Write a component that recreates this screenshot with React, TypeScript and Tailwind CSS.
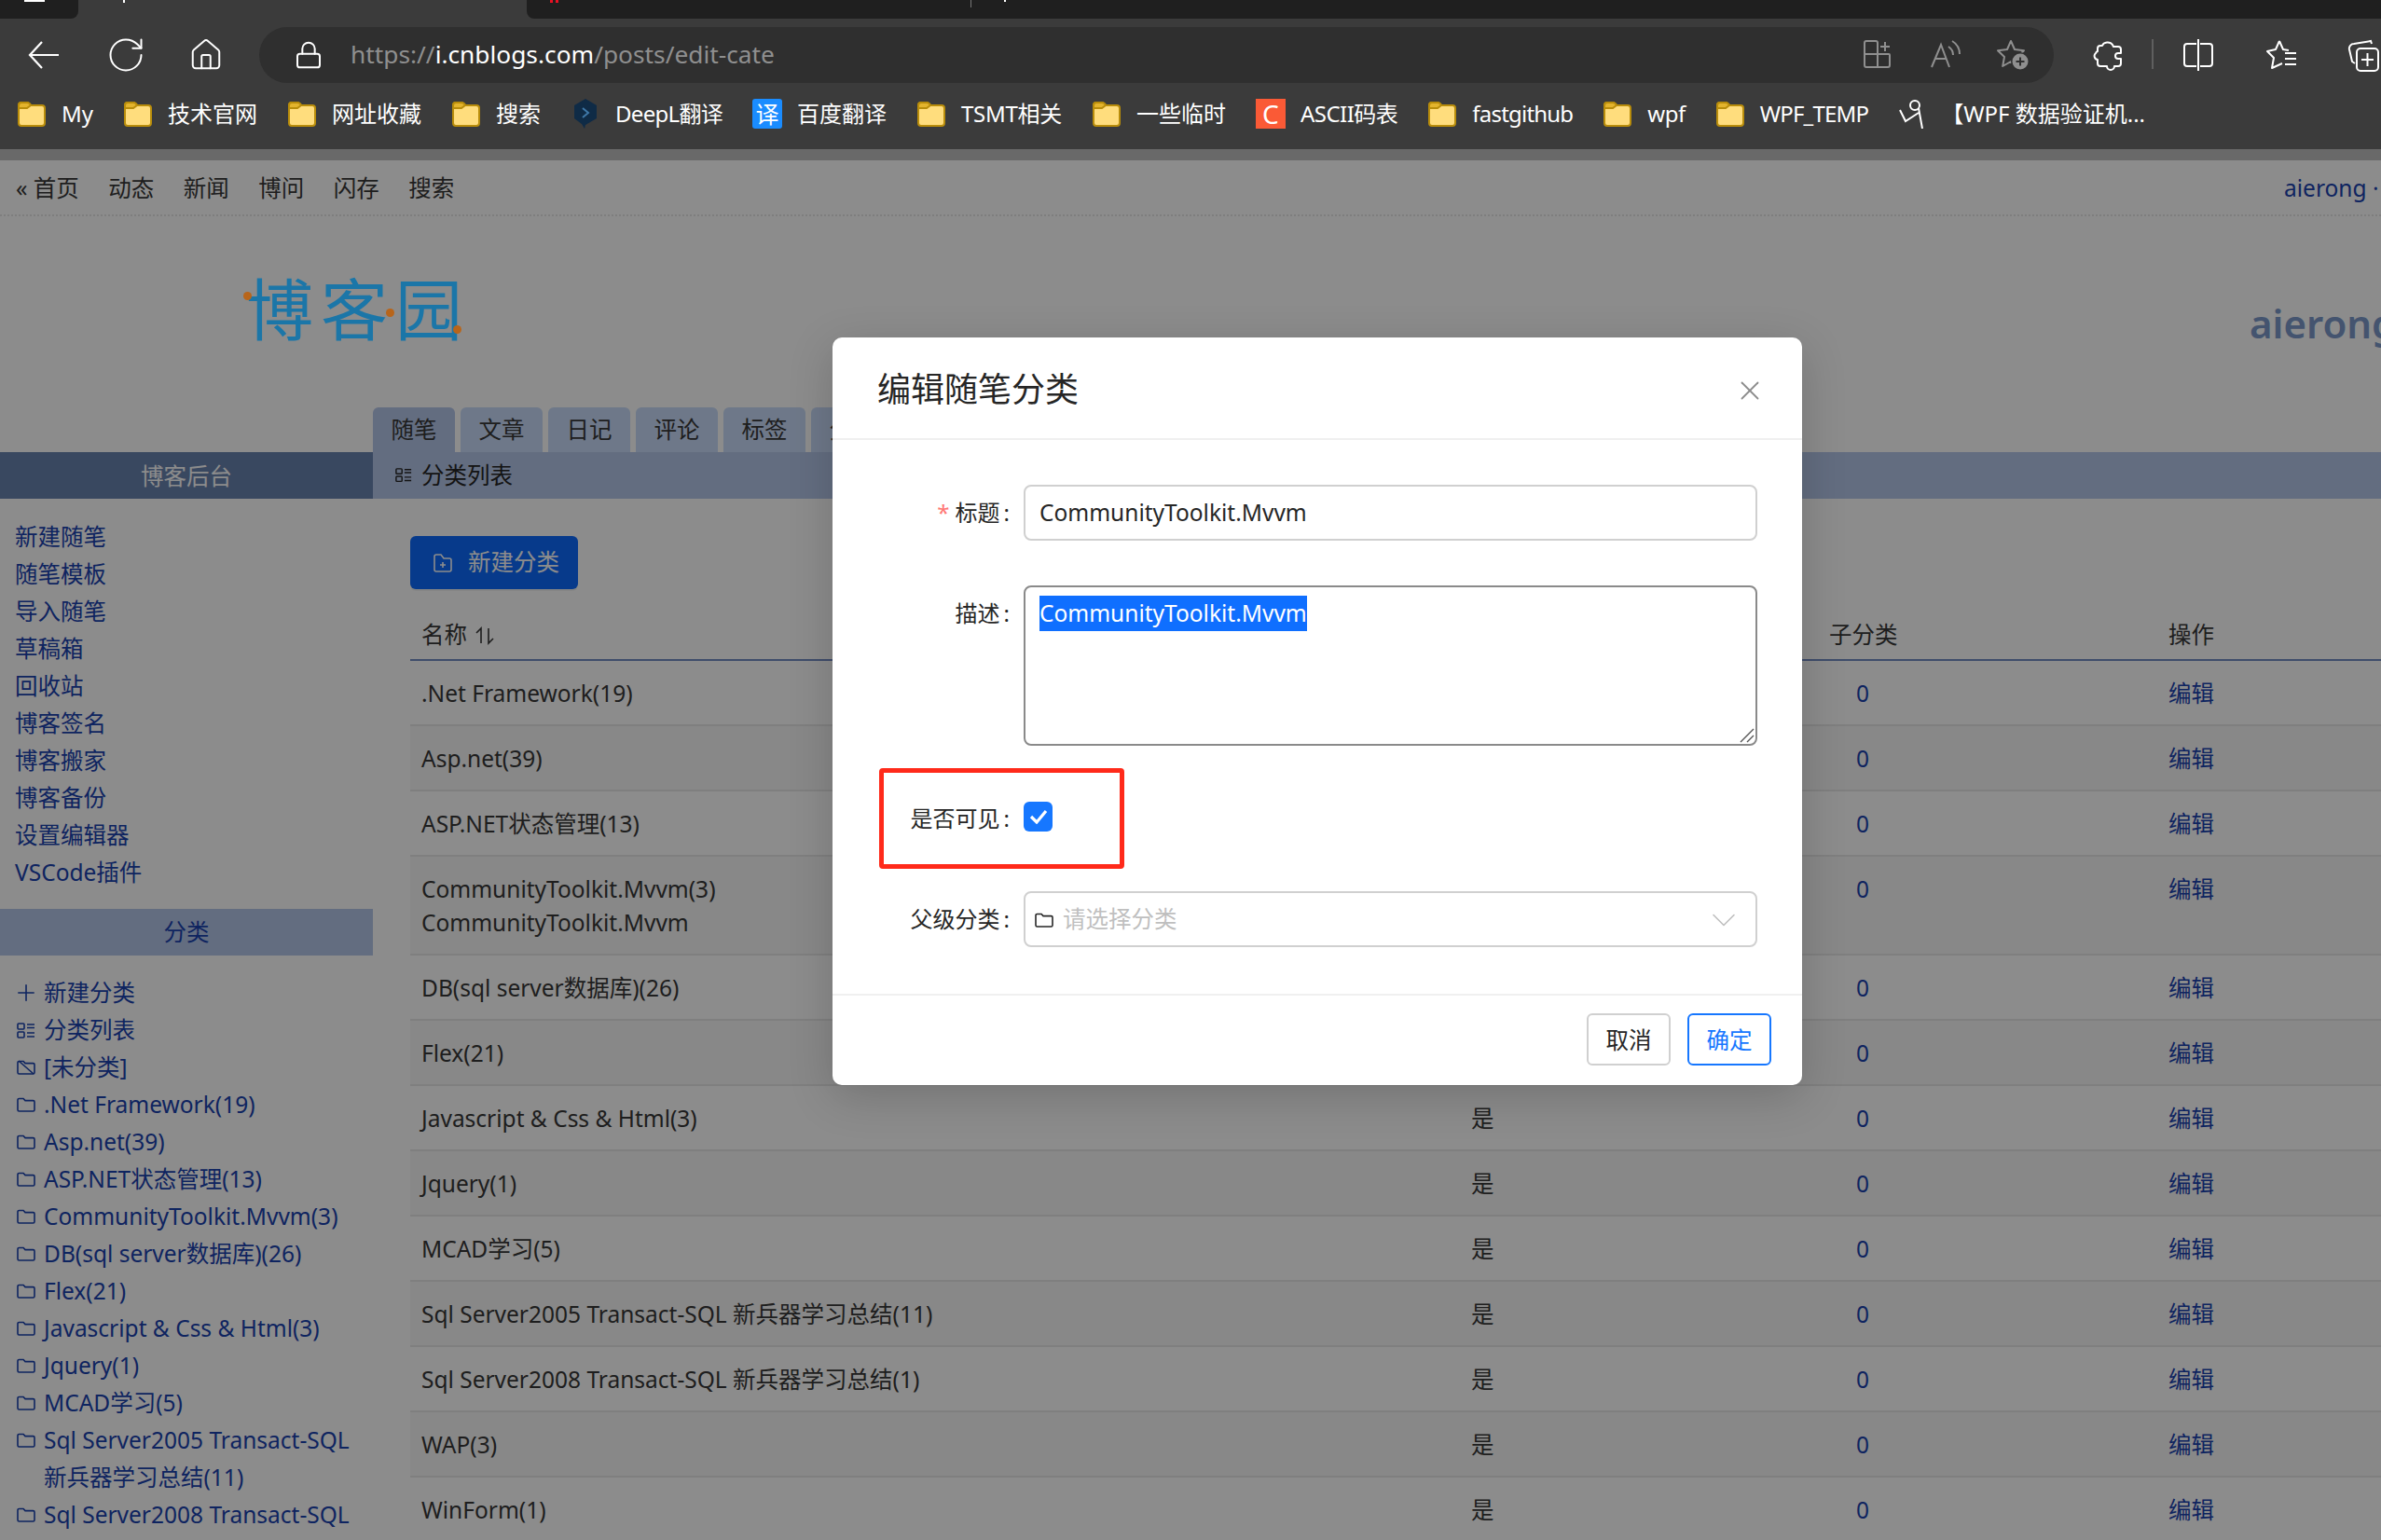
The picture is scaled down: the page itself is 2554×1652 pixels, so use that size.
import { ChevronDown, Home, Lock, Plus, RotateCw, X } from "lucide-react";
import type { ReactNode } from "react";

const sideLinks = ["新建随笔", "随笔模板", "导入随笔", "草稿箱", "回收站", "博客签名", "博客搬家", "博客备份", "设置编辑器", "VSCode插件"];

const categories = [
  ".Net Framework(19)",
  "Asp.net(39)",
  "ASP.NET状态管理(13)",
  "CommunityToolkit.Mvvm(3)",
  "DB(sql server数据库)(26)",
  "Flex(21)",
  "Javascript & Css & Html(3)",
  "Jquery(1)",
  "MCAD学习(5)",
  "Sql Server2005 Transact-SQL 新兵器学习总结(11)",
  "Sql Server2008 Transact-SQL 新兵器学习总结(1)",
];

const rows = [
  ".Net Framework(19)",
  "Asp.net(39)",
  "ASP.NET状态管理(13)",
  "CommunityToolkit.Mvvm(3)\nCommunityToolkit.Mvvm",
  "DB(sql server数据库)(26)",
  "Flex(21)",
  "Javascript & Css & Html(3)",
  "Jquery(1)",
  "MCAD学习(5)",
  "Sql Server2005 Transact-SQL 新兵器学习总结(11)",
  "Sql Server2008 Transact-SQL 新兵器学习总结(1)",
  "WAP(3)",
  "WinForm(1)",
];

function YellowFolder() {
  return (
    <svg width="32" height="28" viewBox="0 0 32 28" className="shrink-0">
      <path d="M2 5a3 3 0 0 1 3-3h6c2 0 3 1 4 3h12a3 3 0 0 1 3 3v16a3 3 0 0 1-3 3H5a3 3 0 0 1-3-3z" fill="#ffdd7d" stroke="#b98d0b" strokeWidth="2" />
      <path d="M2 5a3 3 0 0 1 3-3h6c2 0 3 1 4 3l-4 3H2z" fill="#e3b42d" stroke="#b98d0b" strokeWidth="2" />
    </svg>
  );
}

function SmallFolder({ className = "text-[#1b43af]" }: { className?: string }) {
  return (
    <svg width="20" height="16" viewBox="0 0 20 16" fill="none" stroke="currentColor" strokeWidth="1.6" className={`shrink-0 ${className}`}>
      <path d="M1 3a1.5 1.5 0 0 1 1.5-1.5h4.6L9 3.6h8.5A1.5 1.5 0 0 1 19 5.1v8.4a1.5 1.5 0 0 1-1.5 1.5h-15A1.5 1.5 0 0 1 1 13.5z" />
    </svg>
  );
}

function ListIcon({ size = 20 }: { size?: number }) {
  return (
    <svg width={size} height={size * 0.85} viewBox="0 0 20 17" fill="none" stroke="currentColor" strokeWidth="1.6" className="shrink-0">
      <rect x="1" y="1" width="7" height="6" rx="1" />
      <rect x="1" y="10" width="7" height="6" rx="1" />
      <path d="M11 2h8M11 5.5h8M11 11h8M11 15h8" />
    </svg>
  );
}

function NoFolder() {
  return (
    <svg width="20" height="16" viewBox="0 0 20 16" fill="none" stroke="currentColor" strokeWidth="1.6" className="shrink-0">
      <path d="M1 3a1.5 1.5 0 0 1 1.5-1.5h4.6L9 3.6h8.5A1.5 1.5 0 0 1 19 5.1v8.4a1.5 1.5 0 0 1-1.5 1.5h-15A1.5 1.5 0 0 1 1 13.5z" />
      <path d="M2 1l16 14" />
    </svg>
  );
}

function Bookmark({ icon, label, gap = "gap-[16px]", tight = "" }: { icon?: ReactNode; label: string; gap?: string; tight?: string }) {
  return (
    <div className={`flex items-center ${gap} shrink-0`}>
      {icon ?? <YellowFolder />}
      <span className={`whitespace-nowrap ${tight}`}>{label}</span>
    </div>
  );
}

function BrowserChrome() {
  return (
    <div className="shrink-0 bg-[#3b3b3b] text-white">
      {/* tab strip, only its lowest pixels are in frame */}
      <div className="flex h-[20px]">
        <div className="relative w-[84px] rounded-br-[8px] bg-[#1f1f1f]">
          <div className="absolute left-[26px] top-0 h-[2px] w-[22px] bg-white" />
        </div>
        <div className="relative w-[481px]">
          <div className="absolute left-[48px] top-0 h-[3px] w-[2px] bg-white" />
        </div>
        <div className="relative flex-1 rounded-bl-[8px] bg-[#1f1f1f]">
          <div className="absolute left-[25px] top-0 h-[3px] w-[3px] bg-[#e81123]" />
          <div className="absolute left-[31px] top-0 h-[3px] w-[3px] bg-[#e81123]" />
          <div className="absolute left-[476px] top-0 h-[8px] w-[1px] bg-[#777777]" />
          <div className="absolute left-[512px] top-0 h-[2px] w-[2px] bg-white" />
        </div>
      </div>

      <div className="flex h-[78px] items-center pl-[30px]">
        <svg width="33" height="32" viewBox="0 0 33 32" fill="none" stroke="white" strokeWidth="2.2" className="shrink-0">
          <path d="M33 16H2M15 2L2 16l13 14" />
        </svg>
        <RotateCw size={44} strokeWidth={2} absoluteStrokeWidth className="ml-[50px] shrink-0" />
        <Home size={38} strokeWidth={2} absoluteStrokeWidth className="ml-[45px] shrink-0" />
        <div className="ml-[38px] flex h-[60px] w-[1925px] shrink-0 items-center rounded-full bg-[#2f2f2f] pl-[37px]">
          <Lock size={32} strokeWidth={2} absoluteStrokeWidth />
          <span className="ml-[29px] whitespace-nowrap text-[26.3px] text-[#8f8f8f]">
            https://<span className="text-white">i.cnblogs.com</span>/posts/edit-cate
          </span>
        </div>
      </div>

      <div className="flex h-[62px] items-center gap-[32px] pb-[14px] pl-[18px] text-[24px]">
        <Bookmark label="My" />
        <Bookmark label="技术官网" />
        <Bookmark label="网址收藏" />
        <Bookmark label="搜索" />
        <Bookmark
          label="DeepL翻译"
          tight="tracking-[-0.7px]"
          icon={
            <svg width="32" height="32" viewBox="-2 0 32 32" className="shrink-0">
              <path d="M14 0l12 7v14l-12 7-1 4-3-5-8-6V7z" fill="#0f2b46" />
              <path d="M11 10l6 5-6 5" fill="none" stroke="#3f78a8" strokeWidth="2" />
            </svg>
          }
        />
        <Bookmark
          label="百度翻译"
          icon={<span className="flex h-[32px] w-[32px] items-center justify-center rounded-[3px] bg-[#1a8cff] text-[25px] leading-none text-white">译</span>}
        />
        <Bookmark label="TSMT相关" tight="tracking-[-0.3px]" />
        <Bookmark label="一些临时" />
        <Bookmark
          label="ASCII码表"
          tight="tracking-[-0.5px]"
          icon={<span className="flex h-[32px] w-[32px] items-center justify-center bg-[#fa5a36] text-[28px] leading-none text-white">C</span>}
        />
        <Bookmark label="fastgithub" tight="tracking-[-0.8px]" />
        <Bookmark label="wpf" tight="tracking-[-0.5px]" />
        <Bookmark label="WPF_TEMP" tight="tracking-[-0.8px]" />
        <Bookmark
          label="【WPF 数据验证机..."
          gap="gap-[16px]"
          icon={
            <svg width="30" height="32" viewBox="0 0 30 32" fill="none" stroke="white" strokeWidth="2" className="shrink-0">
              <circle cx="18" cy="7" r="5" />
              <path d="M2 12l6 12 14-9M22 10l4 22" />
            </svg>
          }
        />
      </div>
      <div className="h-[12px] bg-[#696969]" />
    </div>
  );
}

function ToolbarIcons() {
  return (
    <>
      <svg width="30" height="30" viewBox="0 0 30 30" fill="none" stroke="#8f8f8f" strokeWidth="2" className="absolute left-[1999px] top-[43px]">
        <path d="M15 29H3a2 2 0 0 1-2-2V3a2 2 0 0 1 2-2h10a2 2 0 0 1 2 2zM15 15H1M15 15h12a1 1 0 0 1 1 1v11a2 2 0 0 1-2 2H15M23 2v10M18 7h10" />
      </svg>
      <svg width="32" height="32" viewBox="0 0 32 32" fill="none" stroke="#8f8f8f" strokeWidth="2" className="absolute left-[2071px] top-[42px]">
        <path d="M1 30L11 6l9 24M5 21h12M19 8c3 2 5 5 5 9M23 2c5 3 8 8 8 14" />
      </svg>
      <svg width="36" height="34" viewBox="0 0 36 34" fill="none" className="absolute left-[2142px] top-[42px]">
        <path d="M15 2l4 9 10 1.2-7 6.8 1.8 10-8.8-5-8.8 5L8 19 1 12.2 11 11z" stroke="#8f8f8f" strokeWidth="2" strokeLinejoin="round" />
        <circle cx="25" cy="24" r="10" fill="#2f2f2f" />
        <circle cx="25" cy="24" r="8.5" fill="#8f8f8f" />
        <path d="M25 19.5v9M20.5 24h9" stroke="#2f2f2f" strokeWidth="2" />
      </svg>
      <svg width="32" height="34" viewBox="0 0 32 34" fill="none" stroke="white" strokeWidth="2" strokeLinejoin="round" className="absolute left-[2245px] top-[42px]">
        <path d="M10 7a6 5 0 0 1 11-1l1 2h5a3 3 0 0 1 3 3v4h-3a3 3 0 0 0 0 6h3v5a3 3 0 0 1-3 3h-4a4 4 0 0 1-8 0H8a3 3 0 0 1-3-3v-4a4 4 0 0 1-2-7 4 4 0 0 1 2-2v-3a3 3 0 0 1 3-3z" />
      </svg>
      <div className="absolute left-[2308px] top-[42px] h-[32px] w-[2px] bg-[#5f5f5f]" />
      <svg width="32" height="34" viewBox="0 0 32 34" fill="none" stroke="white" strokeWidth="2" className="absolute left-[2342px] top-[42px]">
        <path d="M16 0v34M14 5H4a3 3 0 0 0-3 3v18a3 3 0 0 0 3 3h10M18 5h10a3 3 0 0 1 3 3v18a3 3 0 0 1-3 3H18" />
      </svg>
      <svg width="34" height="34" viewBox="0 0 34 34" fill="none" stroke="white" strokeWidth="2" strokeLinejoin="round" className="absolute left-[2430px] top-[42px]">
        <path d="M15 2l4 9 6 1M15 2l-4 9-9 2 7 7-2 11 11-5M21 15h12M21 21h12M21 27h12" />
      </svg>
      <svg width="34" height="36" viewBox="0 0 34 36" fill="none" stroke="white" strokeWidth="2" className="absolute left-[2518px] top-[41px]">
        <rect x="10" y="11" width="23" height="24" rx="4" />
        <path d="M21.5 16v14M15 23h13M26 6l-1-3-18 3a5 5 0 0 0-5 6l3 13 3 2" />
      </svg>
    </>
  );
}

function Sidebar() {
  return (
    <aside className="w-[400px] shrink-0 text-[#1b43af]">
      <div className="flex h-[50px] items-center justify-center bg-[#6983b0] pt-[2px] text-white">博客后台</div>
      <ul className="mt-[21px] pl-[16px]">
        {sideLinks.map((l) => (
          <li key={l} className="h-[40px] leading-[40px]">{l}</li>
        ))}
      </ul>
      <div className="mt-[19px] flex h-[50px] items-center justify-center bg-[#b5c6e9]">分类</div>
      <ul className="mt-[20px] pl-[18px] pr-[16px]">
        <li className="flex h-[40px] items-center gap-[9px] leading-[40px]">
          <Plus size={28} strokeWidth={1.6} absoluteStrokeWidth className="shrink-0 -mx-[4px]" />
          新建分类
        </li>
        <li className="flex h-[40px] items-center gap-[9px] leading-[40px]">
          <ListIcon />
          分类列表
        </li>
        <li className="flex h-[40px] items-center gap-[9px] leading-[40px]">
          <NoFolder />
          [未分类]
        </li>
        {categories.map((c) => (
          <li key={c} className="flex gap-[9px] leading-[40px]">
            <SmallFolder className="mt-[12px] text-[#1b43af]" />
            <span>{c}</span>
          </li>
        ))}
      </ul>
    </aside>
  );
}

function CategoryTable() {
  return (
    <div className="ml-[40px]">
      <div className="mt-[40px] flex h-[57px] w-[180px] items-center gap-[16px] rounded-[6px] bg-[#0d6bfe] pl-[24px] text-white shadow-[0_2px_0_rgba(0,0,0,0.05)]">
        <svg width="22" height="22" viewBox="0 0 22 22" fill="none" stroke="currentColor" strokeWidth="1.6">
          <path d="M2 4a2 2 0 0 1 2-2h5l3 4h6a2 2 0 0 1 2 2v10a2 2 0 0 1-2 2H4a2 2 0 0 1-2-2zM11 10v6M8 13h6" />
        </svg>
        新建分类
      </div>
      <div className="grid h-[77px] grid-cols-[1126px_384px_364px_1fr] items-center border-b-[2px] border-[#738cc3] pl-[12px] pt-[24px] text-[#383838]">
        <div className="flex items-center gap-[8px]">
          名称
          <svg width="22" height="20" viewBox="0 0 22 20" fill="none" stroke="currentColor" strokeWidth="1.6">
            <path d="M7 18V2L2 7M15 2v16l5-5" />
          </svg>
        </div>
        <div>是否可见</div>
        <div>子分类</div>
        <div>操作</div>
      </div>
      {rows.map((r, i) => (
        <div
          key={r}
          className={`grid grid-cols-[1126px_384px_364px_1fr] content-start border-b-[2px] border-[#e8e8e8] pb-[15px] pl-[12px] pt-[17px] leading-[36px] text-[#383838] ${i % 2 === 1 ? "bg-[#f7f7f7]" : "bg-white"}`}
        >
          <div className="whitespace-pre-line">{r}</div>
          <div>是</div>
          <div className="w-[72px] text-center text-[#1b43af]">0</div>
          <div className="text-[#1b43af]">编辑</div>
        </div>
      ))}
    </div>
  );
}

function FormRow({ label, required, children, className = "" }: { label: string; required?: boolean; children: ReactNode; className?: string }) {
  return (
    <div className={`flex items-start ${className}`}>
      <div className="flex h-[60px] w-[205px] shrink-0 items-center justify-end pr-[15px] text-[24px]">
        {required && <span className="mr-[6px] text-[#ff7875]">*</span>}
        {label}
        <span className="ml-[4px]">:</span>
      </div>
      {children}
    </div>
  );
}

function EditDialog() {
  return (
    <div className="absolute left-[893px] top-[190px] z-10 h-[802px] w-[1040px] rounded-[10px] bg-white text-[#262626] shadow-[0_12px_48px_rgba(0,0,0,0.18)]">
      <div className="relative flex h-[110px] items-center border-b-[2px] border-[#f0f0f0] pl-[48px] pt-[4px] text-[36px]">
        编辑随笔分类
        <X size={34} strokeWidth={1.8} absoluteStrokeWidth className="absolute left-[967px] top-[40px] text-[#8c8c8c]" />
      </div>
      <div className="pt-[48px]">
        <FormRow label="标题" required>
          <div className="flex h-[60px] w-[787px] items-center rounded-[8px] border-[2px] border-[#d0d0d0] pl-[15px]">CommunityToolkit.Mvvm</div>
        </FormRow>
        <FormRow label="描述" className="mt-[48px]">
          <div className="relative h-[172px] w-[787px] rounded-[8px] border-[2px] border-[#8a8a8a] pl-[15px] pt-[9px]">
            <span className="inline-block h-[38px] bg-[#0f6fff] leading-[38px] text-white">CommunityToolkit.Mvvm</span>
            <svg width="16" height="16" viewBox="0 0 16 16" stroke="#555555" strokeWidth="1.4" className="absolute bottom-[1px] right-[1px]">
              <path d="M1 15L15 1M8 15l7-7" />
            </svg>
          </div>
        </FormRow>
        <FormRow label="是否可见" className="mt-[48px]">
          <div className="mt-[12px] flex h-[32px] w-[31px] items-center justify-center rounded-[6px] bg-[#1677ff]">
            <svg width="20" height="16" viewBox="0 0 20 16" fill="none" stroke="white" strokeWidth="3.2">
              <path d="M2 8l6 6L18 2" />
            </svg>
          </div>
        </FormRow>
        <FormRow label="父级分类" className="mt-[48px]">
          <div className="flex h-[60px] w-[787px] items-center rounded-[8px] border-[2px] border-[#d0d0d0] pl-[10px] pr-[12px] pt-[1px]">
            <SmallFolder className="text-[#262626]" />
            <span className="ml-[10px] flex-1 text-[#bfbfbf]">请选择分类</span>
            <ChevronDown size={44} strokeWidth={1.6} absoluteStrokeWidth className="text-[#bfbfbf]" />
          </div>
        </FormRow>
      </div>
      <div className="mt-[50px] flex justify-end gap-[18px] border-t-[2px] border-[#f0f0f0] pr-[33px] pt-[19px]">
        <div className="flex h-[56px] w-[90px] items-center justify-center rounded-[6px] border-[2px] border-[#d0d0d0] pt-[2px]">取消</div>
        <div className="flex h-[56px] w-[90px] items-center justify-center rounded-[6px] border-[2px] border-[#1677ff] pt-[2px] text-[#1677ff]">确定</div>
      </div>
      {/* red annotation around the checkbox row */}
      <div className="absolute left-[50px] top-[462px] h-[108px] w-[263px] rounded-[4px] border-[5px] border-[#ff2a1a]" />
    </div>
  );
}

export default function App() {
  return (
    <div className="relative flex h-[1652px] w-[2554px] flex-col overflow-hidden bg-white font-['Noto_Sans','Noto_Sans_CJK_SC',sans-serif] text-[24.5px] text-[#383838]">
      <BrowserChrome />
      <ToolbarIcons />

      <div className="relative flex-1">
        <div className="flex h-[60px] items-center gap-[31.5px] border-b-[2px] border-dotted border-[#e6e6e6] pl-[17px] pt-[2px]">
          <span>« 首页</span>
          <span>动态</span>
          <span>新闻</span>
          <span>博问</span>
          <span>闪存</span>
          <span>搜索</span>
          <span className="ml-auto w-[104px] whitespace-nowrap text-[#1b43af]">aierong ·</span>
        </div>

        <div className="flex h-[205px] justify-between">
          {/* logo stays saturated through the mask, so it sits above it with its dimmed colour */}
          <div className="relative z-[1] ml-[264px] mt-[59px] h-[80px] w-[240px] text-[72px] leading-[80px] tracking-[8px] text-[#1b76a8]">
            博客园
            <span className="absolute left-[-3px] top-[22px] h-[9px] w-[9px] rounded-full bg-[#b8651a]" />
            <span className="absolute left-[150px] top-[40px] h-[9px] w-[9px] rounded-full bg-[#b8651a]" />
            <span className="absolute left-[222px] top-[58px] h-[9px] w-[9px] rounded-full bg-[#b8651a]" />
          </div>
          <div className="mt-[87px] h-[56px] w-[141px] overflow-hidden whitespace-nowrap text-[42px] font-semibold leading-[56px] text-[#7c99ca]">aierong</div>
        </div>

        <div className="flex h-[48px] gap-[6px] pl-[400px] text-[#383838]">
          {["随笔", "文章", "日记", "评论", "标签", "分类"].map((t, i) => (
            <div key={t} className={`flex w-[88px] items-center justify-center rounded-t-[6px] ${i === 0 ? "bg-[#b4c6e9]" : "bg-[#c8dbf9]"}`}>{t}</div>
          ))}
        </div>

        <div className="flex">
          <Sidebar />
          <main className="min-w-0 flex-1">
            <div className="flex h-[50px] items-center gap-[10px] bg-[#b4c6e9] pl-[24px] text-[#262626]">
              <ListIcon size={18} />
              分类列表
            </div>
            <CategoryTable />
          </main>
        </div>

        <div className="absolute inset-0 bg-black/45" />
        <EditDialog />
      </div>
    </div>
  );
}
